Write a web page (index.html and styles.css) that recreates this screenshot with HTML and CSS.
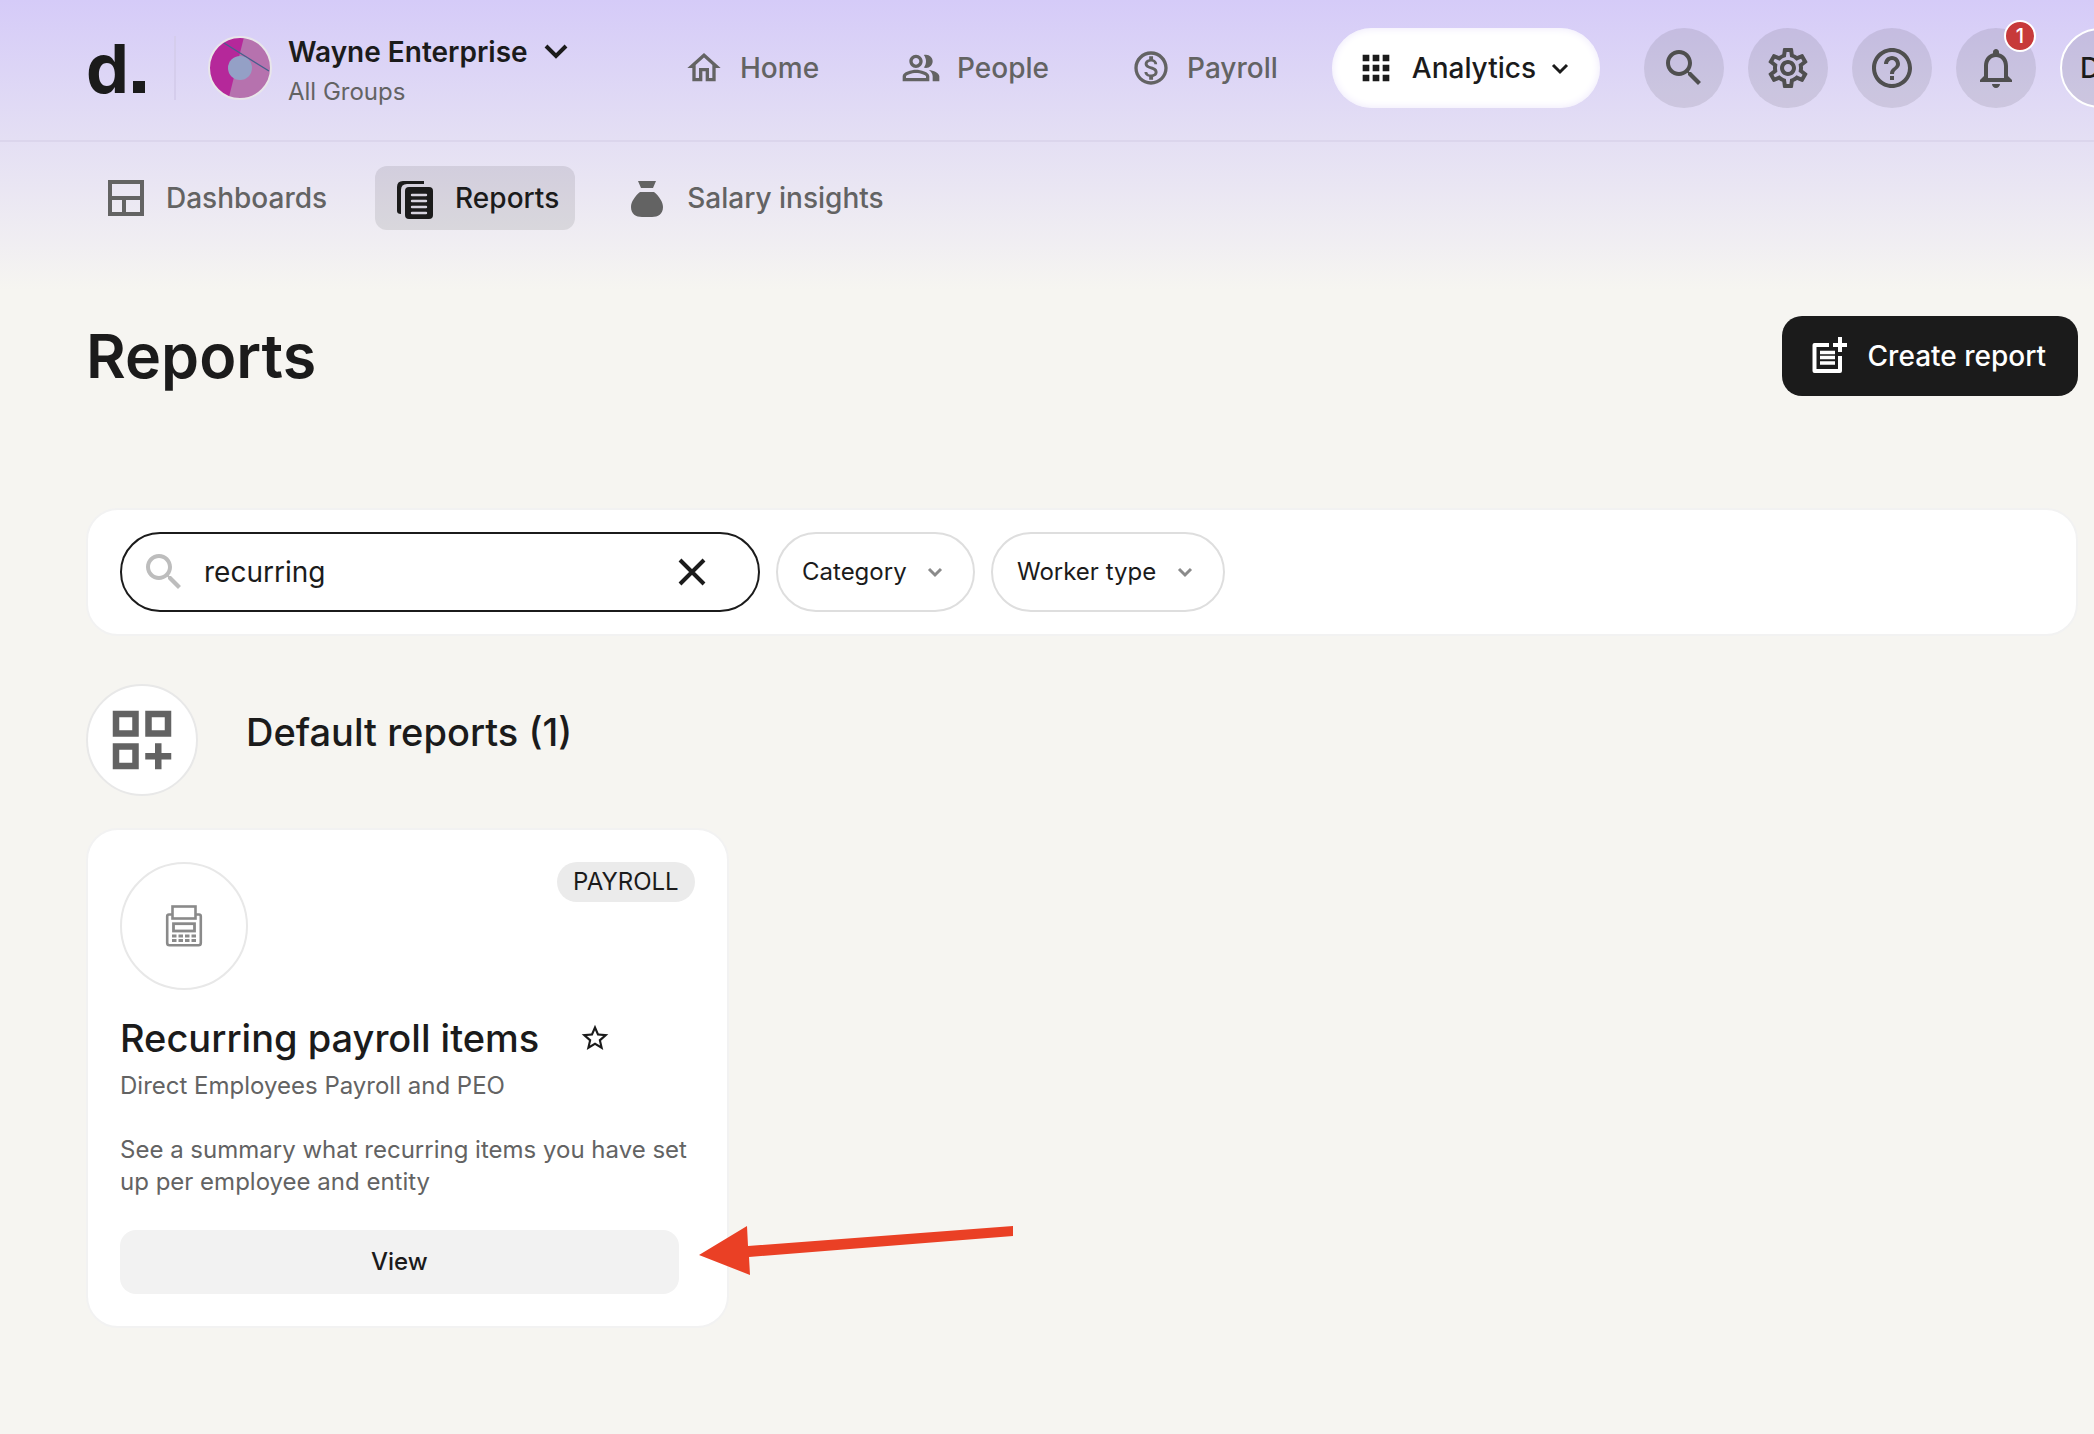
FILE: index.html
```html
<!DOCTYPE html>
<html lang="en">
<head>
<meta charset="utf-8">
<meta name="viewport" content="width=device-width, initial-scale=1">
<title>Reports</title>
<link rel="stylesheet" href="styles.css">
</head>
<body>
<header class="site-header">
  <div class="topbar">
    <div class="brand">
      <a class="logo" href="#" aria-label="Home page">d<span class="logo-dot"></span></a>
      <span class="divider"></span>
      <svg class="avatar" viewBox="0 0 64 64" aria-hidden="true">
        <circle cx="32" cy="32" r="31" fill="#b5289a"/>
        <path d="M36 1A31 31 0 0 1 63 32A31 31 0 0 1 21 61Z" fill="#b672ae"/>
        <path d="M16 7L61 35" stroke="#44608c" stroke-width="1.3"/>
        <circle cx="32" cy="32" r="12" fill="#94a0c6"/>
        <circle cx="32" cy="32" r="31" fill="none" stroke="#e8e6ea" stroke-width="2"/>
      </svg>
      <button class="account" type="button">
        <span class="account-name">Wayne Enterprise
          <svg width="24" height="16" viewBox="0 0 24 16" aria-hidden="true"><path d="M2 2L12 12L22 2" fill="none" stroke="#1b1b1b" stroke-width="4"/></svg>
        </span>
        <span class="account-group">All Groups</span>
      </button>
    </div>
    <nav class="main-nav" aria-label="Main">
      <a class="nav-link" href="#">
        <svg class="icon-40" viewBox="0 0 24 24" aria-hidden="true"><path d="M12 5.69l5 4.5V18h-2v-6H9v6H7v-7.81l5-4.5M12 3L2 12h3v8h6v-6h2v6h6v-8h3L12 3z"/></svg>Home</a>
      <a class="nav-link" href="#">
        <svg class="icon-40" viewBox="0 0 24 24" aria-hidden="true"><path d="M16.67 13.13C18.04 14.06 19 15.32 19 17v3h4v-3c0-2.18-3.57-3.47-6.33-3.87z"/><path d="M15 12c2.21 0 4-1.79 4-4s-1.79-4-4-4c-.47 0-.91.1-1.33.24C14.5 5.27 15 6.58 15 8s-.5 2.73-1.33 3.76c.42.14.86.24 1.33.24z"/><path d="M9 12c2.21 0 4-1.79 4-4s-1.79-4-4-4-4 1.79-4 4 1.79 4 4 4zm0-6c1.1 0 2 .9 2 2s-.9 2-2 2-2-.9-2-2 .9-2 2-2zm0 7c-2.67 0-8 1.34-8 4v3h16v-3c0-2.66-5.33-4-8-4zm6 5H3v-.99C3.2 16.29 6.3 15 9 15s5.8 1.29 6 2v1z"/></svg>People</a>
      <a class="nav-link" href="#">
        <svg class="icon-40" viewBox="0 0 24 24" aria-hidden="true"><path d="M12 2C6.480 2 2 6.480 2 12s4.480 10 10 10 10-4.480 10-10S17.520 2 12 2zm0 18c-4.410 0-8-3.590-8-8s3.590-8 8-8 8 3.590 8 8-3.590 8-8 8zm.31-8.860c-1.770-.45-2.340-.94-2.340-1.670 0-.84.79-1.430 2.100-1.430 1.380 0 1.900.66 1.940 1.640h1.710c-.05-1.340-.87-2.570-2.490-2.970V5H10.900v1.690c-1.510.32-2.720 1.300-2.720 2.810 0 1.790 1.490 2.690 3.660 3.210 1.950.46 2.340 1.150 2.340 1.870 0 .53-.39 1.390-2.100 1.390-1.600 0-2.230-.72-2.320-1.640H8.040c.1 1.700 1.360 2.660 2.860 2.970V19h2.340v-1.670c1.520-.29 2.720-1.160 2.730-2.770-.01-2.200-1.900-2.960-3.660-3.420z"/></svg>Payroll</a>
      <button class="nav-pill" type="button" aria-haspopup="true">
        <svg class="icon-40" viewBox="0 0 24 24" aria-hidden="true"><path d="M4 8h4V4H4v4zm6 12h4v-4h-4v4zm-6 0h4v-4H4v4zm0-6h4v-4H4v4zm6 0h4v-4h-4v4zm6-10v4h4V4h-4zm-6 4h4V4h-4v4zm6 6h4v-4h-4v4zm0 6h4v-4h-4v4z"/></svg>
        <span>Analytics</span>
        <svg class="pill-chevron" width="32" height="32" viewBox="0 0 32 32" aria-hidden="true"><path d="M9 13L16 20L23 13" fill="none" stroke="#1b1b1b" stroke-width="3"/></svg>
      </button>
    </nav>
    <div class="tools">
      <button class="tool" type="button" aria-label="Search">
        <svg class="icon-48" viewBox="0 0 24 24" aria-hidden="true"><path d="M15.5 14h-.79l-.28-.27C15.410 12.590 16 11.110 16 9.500 16 5.910 13.090 3 9.500 3S3 5.910 3 9.500 5.910 16 9.500 16c1.610 0 3.090-.59 4.230-1.570l.27.28v.79l5 4.990L20.490 19l-4.990-5zm-6 0C7.010 14 5 11.990 5 9.500S7.010 5 9.500 5 14 7.010 14 9.500 11.990 14 9.500 14z"/></svg>
      </button>
      <button class="tool" type="button" aria-label="Settings">
        <svg class="icon-48" viewBox="0 0 24 24" aria-hidden="true"><path d="M19.430 12.980c.04-.32.070-.64.070-.98 0-.34-.030-.66-.070-.98l2.110-1.650c.19-.15.240-.42.120-.64l-2-3.460c-.09-.16-.26-.25-.44-.25-.06 0-.12.010-.17.030l-2.490 1c-.52-.4-1.080-.73-1.690-.98l-.38-2.650C14.460 2.180 14.250 2 14 2h-4c-.25 0-.46.180-.49.420l-.38 2.650c-.61.250-1.170.590-1.690.98l-2.490-1c-.06-.02-.12-.03-.18-.03-.17 0-.34.090-.43.250l-2 3.460c-.13.220-.07.490.12.640l2.110 1.650c-.04.320-.07.650-.07.980 0 .33.030.66.070.98l-2.110 1.650c-.19.150-.24.420-.12.640l2 3.460c.09.160.26.250.44.250.06 0 .12-.01.17-.03l2.490-1c.52.4 1.080.73 1.690.98l.38 2.650c.03.240.24.420.49.420h4c.25 0 .46-.18.49-.42l.38-2.650c.61-.25 1.170-.59 1.690-.98l2.490 1c.06.020.12.030.18.030.17 0 .34-.09.430-.25l2-3.460c.12-.22.070-.49-.12-.64l-2.110-1.650zm-1.980-1.710c.04.310.05.520.05.730 0 .21-.02.430-.05.730l-.14 1.130.89.700 1.080.84-.7 1.210-1.270-.51-1.040-.42-.9.680c-.43.320-.84.560-1.250.730l-1.060.430-.16 1.130-.2 1.350h-1.400l-.19-1.350-.16-1.130-1.060-.43c-.43-.18-.83-.41-1.230-.71l-.91-.7-1.060.430-1.270.510-.7-1.210 1.080-.84.890-.7-.14-1.130c-.03-.31-.05-.54-.05-.74s.02-.43.050-.73l.14-1.130-.89-.7-1.080-.84.700-1.210 1.270.510 1.040.420.900-.68c.43-.32.840-.56 1.250-.73l1.060-.43.160-1.130.2-1.350h1.390l.19 1.350.16 1.130 1.060.430c.43.180.83.410 1.230.710l.91.700 1.060-.43 1.270-.51.700 1.210-1.070.850-.89.700.14 1.130zM12 8c-2.210 0-4 1.790-4 4s1.790 4 4 4 4-1.790 4-4-1.790-4-4-4zm0 6c-1.100 0-2-.9-2-2s.9-2 2-2 2 .9 2 2-.9 2-2 2z"/></svg>
      </button>
      <button class="tool" type="button" aria-label="Help">
        <svg class="icon-48" viewBox="0 0 24 24" aria-hidden="true"><path d="M11 18h2v-2h-2v2zm1-16C6.480 2 2 6.480 2 12s4.480 10 10 10 10-4.480 10-10S17.520 2 12 2zm0 18c-4.410 0-8-3.590-8-8s3.590-8 8-8 8 3.590 8 8-3.590 8-8 8zm0-14c-2.210 0-4 1.790-4 4h2c0-1.100.9-2 2-2s2 .9 2 2c0 2-3 1.750-3 5h2c0-2.250 3-2.500 3-5 0-2.210-1.790-4-4-4z"/></svg>
      </button>
      <button class="tool" type="button" aria-label="Notifications">
        <svg class="icon-48" viewBox="0 0 24 24" aria-hidden="true"><path d="M12 22c1.100 0 2-.9 2-2h-4c0 1.100.9 2 2 2zm6-6v-5c0-3.070-1.630-5.640-4.500-6.320V4c0-.83-.67-1.500-1.500-1.500s-1.500.67-1.500 1.500v.68C7.640 5.360 6 7.920 6 11v5l-2 2v1h16v-1l-2-2zm-2 1H8v-6c0-2.480 1.510-4.500 4-4.500s4 2.020 4 4.500v6z"/></svg>
        <span class="count">1</span>
      </button>
      <button class="tool profile" type="button">D</button>
    </div>
  </div>
  <nav class="subnav" aria-label="Analytics">
    <a class="tab" href="#">
      <svg class="icon-48" viewBox="0 0 48 48" aria-hidden="true"><path d="M8 8H40V40H8ZM8 24H40M22 24V40" fill="none" stroke="#636363" stroke-width="4"/></svg>Dashboards</a>
    <a class="tab tab-active" href="#" aria-current="page">
      <svg class="icon-48" viewBox="0 0 48 48" aria-hidden="true"><path d="M33 10V7H12Q6 7 6 13V37Q6 40 10 40V16Q10 10 16 10Z"/><rect x="14" y="13" width="28" height="32" rx="4"/><path d="M21 21H35M21 27H35M21 33H35M21 39H35" stroke="#d6d3de" stroke-width="2.400" stroke-linecap="round"/></svg>Reports</a>
    <a class="tab" href="#">
      <svg class="icon-48" viewBox="0 0 48 48" aria-hidden="true"><path d="M15 7H33L30 14H18ZM17 18H31C36 22 40 28 40 33C40 40 35 43 29 43H19C13 43 8 40 8 33C8 28 12 22 17 18Z"/></svg>Salary insights</a>
  </nav>
</header>

<main class="content">
  <div class="page-head">
    <h1>Reports</h1>
    <button class="create" type="button">
      <svg class="icon-48" viewBox="0 0 48 48" aria-hidden="true"><path d="M23 13H8.500V39H34V24" fill="none" stroke="#fff" stroke-width="4" stroke-linejoin="round"/><path d="M34 5V20M27 13H41" stroke="#fff" stroke-width="4"/><path d="M14 20.500H29M14 25.500H29M14 31H29" stroke="#fff" stroke-width="3.600"/></svg>
      Create report
    </button>
  </div>

  <form class="filters">
    <label class="search">
      <svg class="icon-48" viewBox="0 0 24 24" aria-hidden="true"><path d="M15.5 14h-.79l-.28-.27C15.410 12.590 16 11.110 16 9.500 16 5.910 13.090 3 9.500 3S3 5.910 3 9.500 5.910 16 9.500 16c1.610 0 3.090-.59 4.230-1.570l.27.28v.79l5 4.990L20.490 19l-4.990-5zm-6 0C7.010 14 5 11.990 5 9.500S7.010 5 9.500 5 14 7.010 14 9.500 11.990 14 9.500 14z"/></svg>
      <input type="text" value="recurring" aria-label="Search reports">
      <button class="clear" type="button" aria-label="Clear search">
        <svg class="icon-48" viewBox="0 0 48 48" aria-hidden="true"><path d="M12 12L36 36M36 12L12 36" fill="none" stroke="#1b1b1b" stroke-width="4"/></svg>
      </button>
    </label>
    <label class="dropdown">
      <select aria-label="Category"><option>Category</option></select>
      <svg width="32" height="32" viewBox="0 0 32 32" aria-hidden="true"><path d="M10 13L16 19L22 13" fill="none" stroke="#8a8a8a" stroke-width="3"/></svg>
    </label>
    <label class="dropdown">
      <select aria-label="Worker type"><option>Worker type</option></select>
      <svg width="32" height="32" viewBox="0 0 32 32" aria-hidden="true"><path d="M10 13L16 19L22 13" fill="none" stroke="#8a8a8a" stroke-width="3"/></svg>
    </label>
  </form>

  <section>
    <div class="section-head">
      <span class="section-icon">
        <svg width="78" height="78" viewBox="0 0 24 24" aria-hidden="true"><path d="M3 11h8V3H3v8zm2-6h4v4H5V5zM13 3v8h8V3h-8zm6 6h-4V5h4v4zM3 21h8v-8H3v8zm2-6h4v4H5v-4zM18 13h-2v3h-3v2h3v3h2v-3h3v-2h-3z"/></svg>
      </span>
      <h2>Default reports (1)</h2>
    </div>
    <div class="cards">
      <article class="card">
        <div class="card-top">
          <span class="card-icon">
            <svg class="icon-48" viewBox="0 0 48 48" aria-hidden="true">
              <g fill="none" stroke="#8a8a8a">
                <path d="M12 12.500H9Q7.200 12.500 7.200 14.500V41Q7.200 43.300 9.500 43.300H38.500Q40.800 43.300 40.800 41V14.500Q40.800 12.500 39 12.500H36" stroke-width="2.600"/>
                <rect x="12.500" y="4.500" width="23" height="12" stroke-width="2.600"/>
                <rect x="13.500" y="21.700" width="21" height="7.300" stroke-width="2.800"/>
                <path d="M12 34H36M12 38.500H36" stroke-width="3" stroke-dasharray="4.500 2"/>
              </g>
            </svg>
          </span>
          <span class="tag">PAYROLL</span>
        </div>
        <div class="card-title">
          <h3>Recurring payroll items</h3>
          <button class="star" type="button" aria-label="Add to favourites">
            <svg width="32" height="32" viewBox="0 0 24 24" aria-hidden="true"><path d="M22 9.240l-7.190-.62L12 2 9.190 8.630 2 9.240l5.460 4.730L5.820 21 12 17.270 18.180 21l-1.630-7.030L22 9.240zM12 15.400l-3.760 2.270 1-4.280-3.320-2.880 4.380-.38L12 6.100l1.710 4.040 4.380.38-3.320 2.880 1 4.280L12 15.400z"/></svg>
          </button>
        </div>
        <p class="card-sub">Direct Employees Payroll and PEO</p>
        <p class="card-text">See a summary what recurring items you have set up per employee and entity</p>
        <button class="view" type="button">View</button>
        <svg class="pointer" width="316" height="52" viewBox="0 0 316 52" aria-hidden="true"><path d="M0 29L48 0L49 20L314 0V10L50 31L51 49Z" fill="#ea4025"/></svg>
      </article>
    </div>
  </section>
</main>
</body>
</html>
```

FILE: styles.css
```css
* {
  box-sizing: border-box;
}

body {
  margin: 0;
  overflow-x: hidden;
  font-family: Inter, "Liberation Sans", sans-serif;
  font-size: 24px;
  line-height: 32px;
  color: #1b1b1b;
  background: #f6f5f1 linear-gradient(#d5cbf8 0, #e4dff4 140px, #f6f5f1 290px) no-repeat;
}

h1, h2, h3, p {
  margin: 0;
}

a {
  color: inherit;
  text-decoration: none;
}

button, input, select {
  margin: 0;
  padding: 0;
  border: 0;
  background: none;
  color: inherit;
  font: inherit;
}

svg {
  display: block;
  flex: none;
  fill: currentColor;
}

.icon-40 {
  width: 40px;
  height: 40px;
}

.icon-48 {
  width: 48px;
  height: 48px;
}

/* Header */

.topbar {
  display: flex;
  padding: 28px 0 32px 86px;
  border-bottom: 2px solid #dbd5ec;
  overflow: hidden;
}

.brand {
  display: flex;
  flex: none;
  align-items: center;
  width: 598px;
  height: 80px;
}

.logo {
  width: 88px;
  font-size: 68px;
  font-weight: 700;
  line-height: 80px;
  white-space: nowrap;
}

.logo-dot {
  display: inline-block;
  width: 12px;
  height: 12px;
  margin-left: 4px;
  background: currentColor;
}

.divider {
  width: 2px;
  height: 64px;
  background: #d5cdec;
}

.avatar {
  width: 64px;
  height: 64px;
  margin: 0 16px 0 32px;
}

.account {
  padding-top: 8px;
  text-align: left;
  white-space: nowrap;
}

.account-name {
  display: flex;
  align-items: center;
  gap: 16px;
  font-size: 28px;
  font-weight: 600;
  line-height: 40px;
}

.account-group {
  display: block;
  color: #636363;
  line-height: 40px;
}

.main-nav {
  display: flex;
  flex: none;
  align-items: center;
  gap: 82px;
  font-size: 28px;
  font-weight: 500;
  line-height: 40px;
}

.nav-link {
  display: flex;
  align-items: center;
  gap: 16px;
  color: #636363;
}

.nav-pill {
  display: flex;
  align-items: center;
  gap: 16px;
  height: 80px;
  margin-left: -28px;
  padding: 0 24px;
  border-radius: 40px;
  background: #fff;
  box-shadow: inset 0 0 8px #ece7fb;
}

.pill-chevron {
  margin-left: -8px;
}

.tools {
  display: flex;
  flex: none;
  gap: 24px;
  margin-left: 44px;
}

.tool {
  position: relative;
  display: flex;
  flex: none;
  align-items: center;
  justify-content: center;
  width: 80px;
  height: 80px;
  border-radius: 50%;
  background: rgba(27, 27, 27, 0.1);
  color: #4f4f4f;
}

.profile {
  border: 2px solid #fff;
  color: #1b1b1b;
  font-size: 28px;
  font-weight: 500;
  justify-content: flex-start;
  padding-left: 18px;
}

.count {
  position: absolute;
  top: -8px;
  right: 0;
  width: 32px;
  height: 32px;
  border: 2px solid #fff;
  border-radius: 50%;
  background: #c73a3a;
  color: #fff;
  font-size: 20px;
  font-weight: 500;
  line-height: 28px;
}

.subnav {
  display: flex;
  gap: 32px;
  padding: 24px 0 0 86px;
}

.tab {
  display: flex;
  align-items: center;
  gap: 16px;
  height: 64px;
  padding: 0 16px;
  border-radius: 12px;
  color: #636363;
  font-size: 28px;
  font-weight: 500;
}

.tab-active {
  background: rgba(27, 27, 27, 0.1);
  color: #1b1b1b;
}

/* Page content */

.content {
  padding: 86px 16px 48px 86px;
}

.page-head {
  display: flex;
  align-items: center;
  justify-content: space-between;
  margin-bottom: 112px;
}

h1 {
  font-size: 61px;
  font-weight: 600;
  line-height: 80px;
}

.create {
  display: flex;
  align-items: center;
  gap: 14px;
  height: 80px;
  padding: 0 32px 0 24px;
  border-radius: 20px;
  background: #1b1b1b;
  color: #fff;
  font-size: 28px;
  font-weight: 500;
}

.filters {
  display: flex;
  gap: 16px;
  padding: 22px 32px;
  border: 2px solid #f2f2f2;
  border-radius: 32px;
  background: #fff;
}

.search {
  display: flex;
  align-items: center;
  gap: 16px;
  width: 640px;
  height: 80px;
  padding: 0 42px 0 18px;
  border: 2px solid #1b1b1b;
  border-radius: 40px;
  color: #bdbdbd;
}

.search input {
  flex: 1;
  min-width: 0;
  outline: none;
  color: #1b1b1b;
  font-size: 28px;
}

.dropdown {
  display: flex;
  align-items: center;
  gap: 12px;
  height: 80px;
  padding: 0 22px 0 24px;
  border: 2px solid #dedede;
  border-radius: 40px;
}

.dropdown select {
  appearance: none;
  outline: none;
}

.section-head {
  display: flex;
  gap: 48px;
  margin: 48px 0 32px;
}

.section-icon {
  display: flex;
  align-items: center;
  justify-content: center;
  width: 112px;
  height: 112px;
  border: 2px solid #e8e8e8;
  border-radius: 50%;
  background: #fff;
  color: #636363;
}

h2, h3 {
  font-size: 38px;
  font-weight: 500;
  line-height: 48px;
}

h2 {
  padding-top: 24px;
}

.cards {
  display: grid;
  grid-template-columns: repeat(3, 1fr);
  gap: 32px;
}

.card {
  position: relative;
  padding: 32px;
  border: 2px solid #f2f2f2;
  border-radius: 32px;
  background: #fff;
}

.card-top {
  display: flex;
  align-items: flex-start;
  justify-content: space-between;
  margin-bottom: 24px;
}

.card-icon {
  display: flex;
  align-items: center;
  justify-content: center;
  width: 128px;
  height: 128px;
  border: 2px solid #e8e8e8;
  border-radius: 50%;
}

.tag {
  padding: 4px 16px;
  border-radius: 20px;
  background: #ebebeb;
}

.card-title {
  display: flex;
  align-items: center;
  gap: 40px;
  margin-bottom: 8px;
}

.card-sub, .card-text {
  margin-bottom: 32px;
  color: #636363;
}

.view {
  display: block;
  width: calc(100% - 16px);
  height: 64px;
  border-radius: 16px;
  background: #f2f2f2;
  font-weight: 500;
}

.pointer {
  position: absolute;
  left: calc(100% - 28px);
  bottom: 48px;
  z-index: 1;
}
```
